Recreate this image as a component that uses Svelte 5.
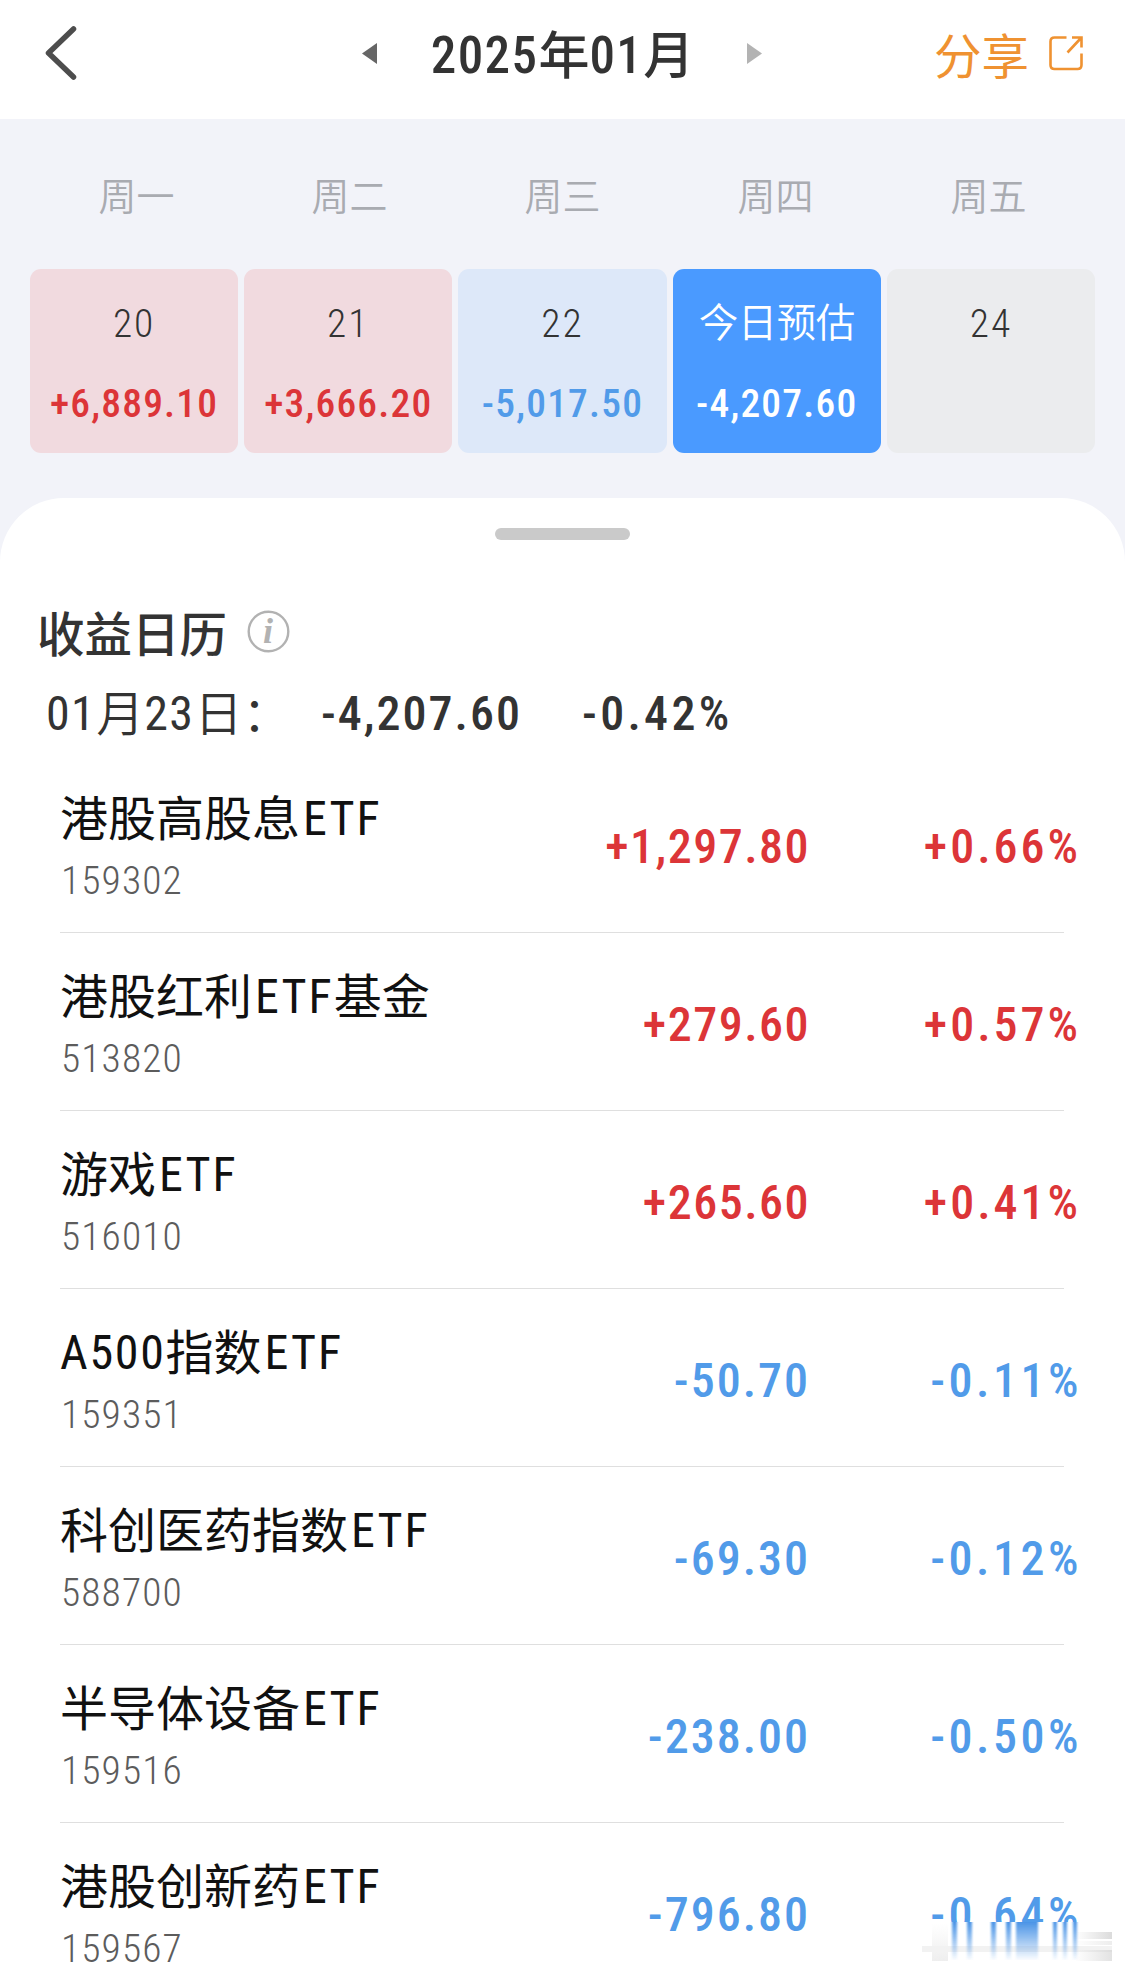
<script>
	const weekdays = ['周一', '周二', '周三', '周四', '周五'];

	const days = [
		{ label: '20', amount: '+6,889.10', type: 'up' },
		{ label: '21', amount: '+3,666.20', type: 'up' },
		{ label: '22', amount: '-5,017.50', type: 'down' },
		{ label: '今日预估', amount: '-4,207.60', type: 'today' },
		{ label: '24', amount: '', type: 'empty' }
	];

	const funds = [
		{ name: '港股高股息ETF', code: '159302', amount: '+1,297.80', rate: '+0.66%' },
		{ name: '港股红利ETF基金', code: '513820', amount: '+279.60', rate: '+0.57%' },
		{ name: '游戏ETF', code: '516010', amount: '+265.60', rate: '+0.41%' },
		{ name: 'A500指数ETF', code: '159351', amount: '-50.70', rate: '-0.11%' },
		{ name: '科创医药指数ETF', code: '588700', amount: '-69.30', rate: '-0.12%' },
		{ name: '半导体设备ETF', code: '159516', amount: '-238.00', rate: '-0.50%' },
		{ name: '港股创新药ETF', code: '159567', amount: '-796.80', rate: '-0.64%' }
	];

	// latin runs have their own spacing
	function split(text) {
		return text.match(/[\x20-\x7e]+|[^\x20-\x7e]+/g) || [];
	}

	function isLatin(part) {
		return part.charCodeAt(0) < 127;
	}
</script>

{#snippet mixed(text)}
	{#each split(text) as part}<span class={isLatin(part) ? 'latin' : 'han'}>{part}</span>{/each}
{/snippet}

<main>
	<header>
		<svg class="back" width="34" height="56" viewBox="0 0 34 56">
			<path d="M28.5 4L3.5 28L28.5 52" />
		</svg>

		<div class="month">
			<svg width="15" height="21" viewBox="0 0 15 21"><path d="M15 0V21L0 10.5Z" fill="#666" /></svg>
			<h1>{@render mixed('2025年01月')}</h1>
			<svg width="15" height="21" viewBox="0 0 15 21"><path d="M0 0V21L15 10.5Z" fill="#b3b3b3" /></svg>
		</div>

		<div class="share">
			<span>分享</span>
			<svg width="34" height="36" viewBox="0 0 34 36">
				<path d="M17.5 2.5H5.5Q1.5 2.5 1.5 6.5V30Q1.5 34 5.5 34H28.5Q32.5 34 32.5 30V18.5" />
				<path d="M23 2.5H32.5V12.5M32 3L18.5 17.5" />
			</svg>
		</div>
	</header>

	<section class="calendar">
		<div class="weekdays">
			{#each weekdays as day}
				<span>{day}</span>
			{/each}
		</div>
		<div class="days">
			{#each days as day}
				<div class="day {day.type}">
					<span class="label">{day.label}</span>
					<span class="value">{day.amount}</span>
				</div>
			{/each}
		</div>
	</section>

	<section class="sheet">
		<div class="handle"></div>

		<div class="heading">
			<h2>收益日历</h2>
			<svg width="43" height="43" viewBox="0 0 43 43">
				<circle cx="21.5" cy="21.5" r="19.8" />
				<text x="21" y="33">i</text>
			</svg>
		</div>

		<div class="summary">
			<span class="date">{@render mixed('01月23日：')}</span>
			<strong class="total">-4,207.60</strong>
			<strong class="percent">-0.42%</strong>
		</div>

		<div class="list">
			{#each funds as fund}
				<div class="row {fund.amount[0] === '+' ? 'gain' : 'loss'}">
					<div class="fund">
						<div class="name">{@render mixed(fund.name)}</div>
						<div class="code">{fund.code}</div>
					</div>
					<div class="num">{fund.amount}</div>
					<div class="num rate">{fund.rate}</div>
				</div>
			{/each}
		</div>
	</section>

	<!-- smeared strip in the bottom right corner -->
	<svg class="smear" width="200" height="49" viewBox="0 0 200 49">
		<defs>
			<linearGradient id="streak" x1="0" y1="0" x2="0" y2="1">
				<stop offset="0" stop-color="#4a94e6" />
				<stop offset="1" stop-color="#4a94e6" stop-opacity="0.03" />
			</linearGradient>
			<linearGradient id="grey" x1="0" y1="0" x2="1" y2="0">
				<stop offset="0" stop-color="#ccc" stop-opacity="0" />
				<stop offset="1" stop-color="#ccc" stop-opacity="0.7" />
			</linearGradient>
			<linearGradient id="pale" x1="0" y1="0" x2="0" y2="1">
				<stop offset="0" stop-color="#eee" stop-opacity="0" />
				<stop offset="1" stop-color="#eee" />
			</linearGradient>
			<filter id="soft" x="-10%" y="-10%" width="120%" height="120%">
				<feGaussianBlur stdDeviation="1.2 0" />
			</filter>
		</defs>
		<rect width="200" height="49" fill="#fff" />
		<rect x="12" y="2" width="16" height="37" fill="url(#pale)" />
		<rect x="2" y="24" width="190" height="6" fill="#f2f2f2" />
		<g fill="url(#grey)">
			<rect x="155" y="10" width="37" height="7" />
			<rect x="155" y="19" width="37" height="4" opacity="0.5" />
			<rect x="155" y="28" width="37" height="11" opacity="0.8" />
		</g>
		<g fill="url(#streak)" filter="url(#soft)">
			<rect x="32" width="5" height="38" />
			<rect x="47" width="5" height="38" />
			<rect x="71" width="5" height="38" />
			<rect x="86" width="5" height="38" />
			<rect x="96" width="22" height="38" />
			<rect x="133" width="4" height="38" />
			<rect x="143" width="4" height="38" />
			<rect x="153" width="4" height="38" />
		</g>
	</svg>
</main>

<style>
	:global(body) {
		overflow: hidden;
		background: #fff;
	}

	main {
		position: relative;
		width: 1125px;
		height: 1971px;
		overflow: hidden;
		font-family: Roboto, 'Noto Sans CJK SC', sans-serif;
		font-stretch: 75%;
		background: #f2f3f9;
		color: #333;
	}

	h1,
	h2 {
		margin: 0;
		font-weight: 500;
	}

	header {
		display: grid;
		grid-template-columns: 1fr auto 1fr;
		align-items: center;
		box-sizing: border-box;
		height: 119px;
		padding: 0 42px 13px 45px;
		background: #fff;
	}

	.back {
		fill: none;
		stroke: #4d4d4d;
		stroke-width: 5.5;
		stroke-linecap: round;
		stroke-linejoin: round;
	}

	.month {
		display: flex;
		align-items: center;
		justify-content: space-between;
		width: 401px;
		margin-right: 4px;
	}

	h1 {
		padding: 5px 0 0 1px;
		font-size: 51px;
		line-height: 64px;
		white-space: nowrap;
	}

	.latin {
		letter-spacing: 1.4px;
	}

	.han {
		line-height: 1;
		vertical-align: -1px;
	}

	.share {
		display: flex;
		align-items: center;
		justify-content: flex-end;
		gap: 20px;
		font-size: 47.5px;
		line-height: 60px;
		color: #ef9231;
	}

	.share span {
		padding-top: 9px;
	}

	.share svg {
		fill: none;
		stroke: #ef9231;
		stroke-width: 2.6;
	}

	.calendar {
		padding: 48px 30px 45px;
	}

	.weekdays {
		display: grid;
		grid-template-columns: repeat(5, 213px);
		height: 60px;
		font-size: 38px;
		font-weight: 350;
		line-height: 60px;
		text-align: center;
		color: #a9abb1;
	}

	.days {
		display: grid;
		grid-template-columns: repeat(5, 1fr);
		gap: 6px;
		margin-top: 42px;
	}

	.day {
		display: flex;
		flex-direction: column;
		align-items: center;
		gap: 32px;
		box-sizing: border-box;
		height: 184px;
		padding-top: 31px;
		border-radius: 11px;
		font-size: 39.5px;
		line-height: 48px;
		letter-spacing: 1.2px;
	}

	.label {
		font-weight: 350;
		letter-spacing: 2px;
	}

	.value {
		font-weight: 500;
	}

	.up {
		background: #f1dadf;
	}

	.up .value {
		color: #dc3538;
	}

	.down {
		background: #dde8f9;
	}

	.down .value {
		color: #519be9;
	}

	.today {
		background: #4a9aff;
		color: #fff;
	}

	.today .label {
		letter-spacing: -0.5px;
	}

	.empty {
		background: #ebecee;
	}

	.sheet {
		height: 1500px;
		border-radius: 64px 64px 0 0;
		background: #fff;
		padding-top: 30px;
	}

	.handle {
		width: 135px;
		height: 12px;
		margin: 0 auto;
		border-radius: 6px;
		background: #cacaca;
	}

	.heading {
		display: flex;
		align-items: center;
		gap: 20px;
		margin: 66px 0 18px 37px;
	}

	h2 {
		font-size: 47.5px;
		line-height: 60px;
	}

	.heading svg {
		margin-top: -9px;
	}

	.heading circle {
		fill: none;
		stroke: #b2b2b2;
		stroke-width: 2.4;
	}

	.heading text {
		font-family: 'Liberation Serif', serif;
		font-size: 36px;
		font-weight: bold;
		font-style: italic;
		text-anchor: middle;
		fill: #b2b2b2;
	}

	.summary {
		display: flex;
		padding-left: 46px;
		font-size: 48px;
		line-height: 60px;
	}

	.summary strong {
		font-weight: 500;
	}

	.date {
		width: 275px;
		white-space: nowrap;
	}

	.date .han {
		font-weight: 350;
	}

	.total {
		width: 261px;
		letter-spacing: 2px;
	}

	.percent {
		letter-spacing: 3.3px;
	}

	.list {
		width: 1004px;
		margin: 11px 0 0 60px;
	}

	.row {
		display: grid;
		grid-template-columns: 1fr 250px 256px;
		align-items: center;
		box-sizing: border-box;
		height: 178px;
		padding-top: 6px;
		border-bottom: 1px solid #dfdfdf;
	}

	.fund {
		white-space: nowrap;
	}

	.name {
		font-size: 48px;
		line-height: 60px;
		color: #111;
	}

	.name .latin {
		padding-left: 3px;
		letter-spacing: 2.1px;
	}

	.name .latin:first-child {
		padding-left: 0;
		letter-spacing: 1.7px;
	}

	.code {
		margin: 8px 0 0 1px;
		font-size: 39.5px;
		font-weight: 300;
		line-height: 48px;
		letter-spacing: 1.1px;
		color: #5c5c5c;
	}

	.num {
		margin-right: -2px;
		font-size: 48px;
		font-weight: 500;
		line-height: 60px;
		letter-spacing: 1.5px;
		text-align: right;
	}

	.rate {
		margin-right: -17px;
		letter-spacing: 3px;
	}

	.gain .num {
		color: #dc3538;
	}

	.loss .num {
		color: #519be9;
	}

	.loss .num:not(.rate) {
		letter-spacing: 2px;
	}

	.loss .rate {
		margin-right: -18px;
		letter-spacing: 3.5px;
	}

	.smear {
		position: absolute;
		right: 5px;
		bottom: 0;
	}
</style>
